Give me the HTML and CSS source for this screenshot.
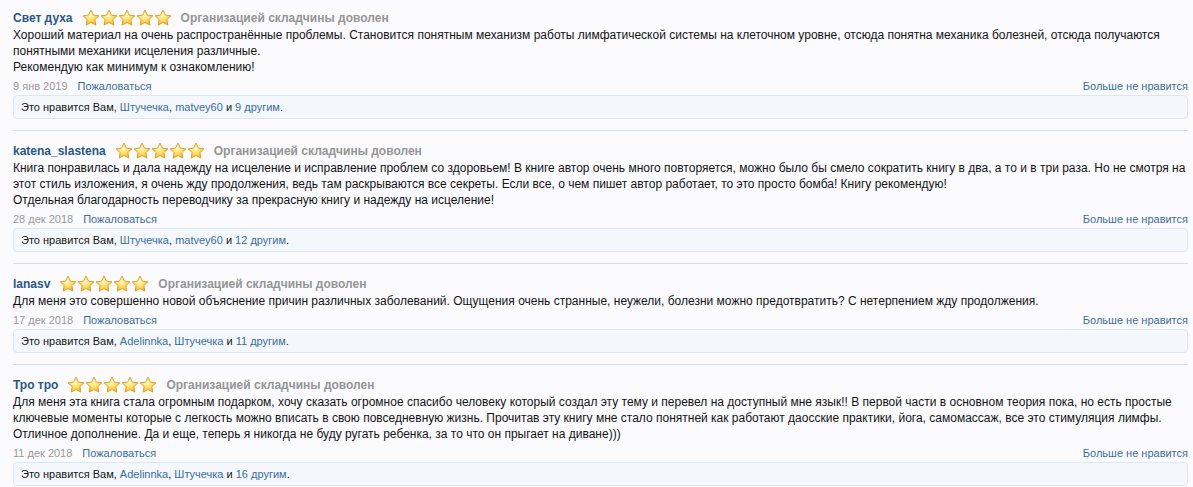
FILE: index.html
```html
<!DOCTYPE html>
<html lang="ru">
<head>
    <meta charset="UTF-8">
    <title>Отзывы</title>
    <link rel="stylesheet" href="styles.css">
</head>
<body>
    <svg width="0" height="0" class="defs">
        <defs>
            <radialGradient id="starFill" cx="0.45" cy="0.35" r="0.7">
                <stop offset="0" stop-color="#fff9d8"/>
                <stop offset="0.3" stop-color="#ffe98a"/>
                <stop offset="0.7" stop-color="#f9cc48"/>
                <stop offset="1" stop-color="#eaa820"/>
            </radialGradient>
            <symbol id="star" viewBox="0 0 20 20">
                <path d="M10 1.2l2.7 5.6 6.1.8-4.5 4.2 1.1 6.1L10 15l-5.4 2.9 1.1-6.1L1.2 7.6l6.1-.8z" fill="url(#starFill)" stroke="#d99a22" stroke-width="1" stroke-linejoin="round"/>
            </symbol>
        </defs>
    </svg>

    <div class="reviews">
        <!-- review 1 -->
        <div class="review">
            <div class="review-head">
                <a class="author" href="#">Свет духа</a>
                <span class="stars">
                    <svg><use href="#star"/></svg><svg><use href="#star"/></svg><svg><use href="#star"/></svg><svg><use href="#star"/></svg><svg><use href="#star"/></svg>
                </span>
                <span class="rating-text">Организацией складчины доволен</span>
            </div>
            <div class="review-text">
                Хороший материал на очень распространённые проблемы. Становится понятным механизм работы лимфатической системы на клеточном уровне, отсюда понятна механика болезней, отсюда получаются понятными механики исцеления различные.<br>
                Рекомендую как минимум к ознакомлению!
            </div>
            <div class="review-meta">
                <span><span class="date">9 янв 2019</span><a href="#" class="link">Пожаловаться</a></span>
                <a href="#" class="link">Больше не нравится</a>
            </div>
            <div class="likes">Это нравится Вам, <a href="#">Штучечка</a>, <a href="#">matvey60</a> и <a href="#">9 другим</a>.</div>
        </div>

        <!-- review 2 -->
        <div class="review">
            <div class="review-head">
                <a class="author" href="#">katena_slastena</a>
                <span class="stars">
                    <svg><use href="#star"/></svg><svg><use href="#star"/></svg><svg><use href="#star"/></svg><svg><use href="#star"/></svg><svg><use href="#star"/></svg>
                </span>
                <span class="rating-text">Организацией складчины доволен</span>
            </div>
            <div class="review-text">
                Книга понравилась и дала надежду на исцеление и исправление проблем со здоровьем! В книге автор очень много повторяется, можно было бы смело сократить книгу в два, а то и в три раза. Но не смотря на этот стиль изложения, я очень жду продолжения, ведь там раскрываются все секреты. Если все, о чем пишет автор работает, то это просто бомба! Книгу рекомендую!<br>
                Отдельная благодарность переводчику за прекрасную книгу и надежду на исцеление!
            </div>
            <div class="review-meta">
                <span><span class="date">28 дек 2018</span><a href="#" class="link">Пожаловаться</a></span>
                <a href="#" class="link">Больше не нравится</a>
            </div>
            <div class="likes">Это нравится Вам, <a href="#">Штучечка</a>, <a href="#">matvey60</a> и <a href="#">12 другим</a>.</div>
        </div>

        <!-- review 3 -->
        <div class="review">
            <div class="review-head">
                <a class="author" href="#">lanasv</a>
                <span class="stars">
                    <svg><use href="#star"/></svg><svg><use href="#star"/></svg><svg><use href="#star"/></svg><svg><use href="#star"/></svg><svg><use href="#star"/></svg>
                </span>
                <span class="rating-text">Организацией складчины доволен</span>
            </div>
            <div class="review-text">
                Для меня это совершенно новой объяснение причин различных заболеваний. Ощущения очень странные, неужели, болезни можно предотвратить? С нетерпением жду продолжения.
            </div>
            <div class="review-meta">
                <span><span class="date">17 дек 2018</span><a href="#" class="link">Пожаловаться</a></span>
                <a href="#" class="link">Больше не нравится</a>
            </div>
            <div class="likes">Это нравится Вам, <a href="#">Adelinnka</a>, <a href="#">Штучечка</a> и <a href="#">11 другим</a>.</div>
        </div>

        <!-- review 4 -->
        <div class="review">
            <div class="review-head">
                <a class="author" href="#">Тро тро</a>
                <span class="stars">
                    <svg><use href="#star"/></svg><svg><use href="#star"/></svg><svg><use href="#star"/></svg><svg><use href="#star"/></svg><svg><use href="#star"/></svg>
                </span>
                <span class="rating-text">Организацией складчины доволен</span>
            </div>
            <div class="review-text">
                Для меня эта книга стала огромным подарком, хочу сказать огромное спасибо человеку который создал эту тему и перевел на доступный мне язык!! В первой части в основном теория пока, но есть простые ключевые моменты которые с легкость можно вписать в свою повседневную жизнь. Прочитав эту книгу мне стало понятней как работают даосские практики, йога, самомассаж, все это стимуляция лимфы. Отличное дополнение. Да и еще, теперь я никогда не буду ругать ребенка, за то что он прыгает на диване)))
            </div>
            <div class="review-meta">
                <span><span class="date">11 дек 2018</span><a href="#" class="link">Пожаловаться</a></span>
                <a href="#" class="link">Больше не нравится</a>
            </div>
            <div class="likes">Это нравится Вам, <a href="#">Adelinnka</a>, <a href="#">Штучечка</a> и <a href="#">16 другим</a>.</div>
        </div>
    </div>
</body>
</html>
```

FILE: styles.css
```css
body {
    margin: 0;
    background-color: #fbfbfe;
    font-family: "Liberation Sans", Arial, sans-serif;
    font-size: 12px;
    color: #141414;
}
.defs {
    position: absolute;
}
.reviews {
    padding: 0 5px 0 13px;
}
.review {
    padding: 11px 0 11px;
    border-bottom: 1px solid #d5dde8;
}
.review:first-child {
    padding-top: 9px;
}
.review-head {
    display: flex;
    align-items: center;
    height: 18px;
}
.author {
    font-weight: bold;
    color: #2a5885;
    text-decoration: none;
}
.stars {
    display: flex;
    margin-left: 9px;
    margin-right: 9px;
}
.stars svg {
    width: 18px;
    height: 18px;
}
.rating-text {
    font-weight: bold;
    color: #959595;
}
.review-text {
    line-height: 16px;
}
.review-meta {
    display: flex;
    justify-content: space-between;
    margin-top: 4px;
    font-size: 11px;
    line-height: 14px;
}
.date {
    color: #999;
    margin-right: 10px;
}
.link {
    color: #3b6d9c;
    text-decoration: none;
}
.likes {
    margin-top: 2px;
    padding: 5px 7px 4px;
    height: 13px;
    line-height: 13px;
    font-size: 11px;
    background-color: #f4f8fc;
    border: 1px solid #dbe7f4;
    border-radius: 4px;
}
.likes a {
    color: #3b6d9c;
    text-decoration: none;
}
```
